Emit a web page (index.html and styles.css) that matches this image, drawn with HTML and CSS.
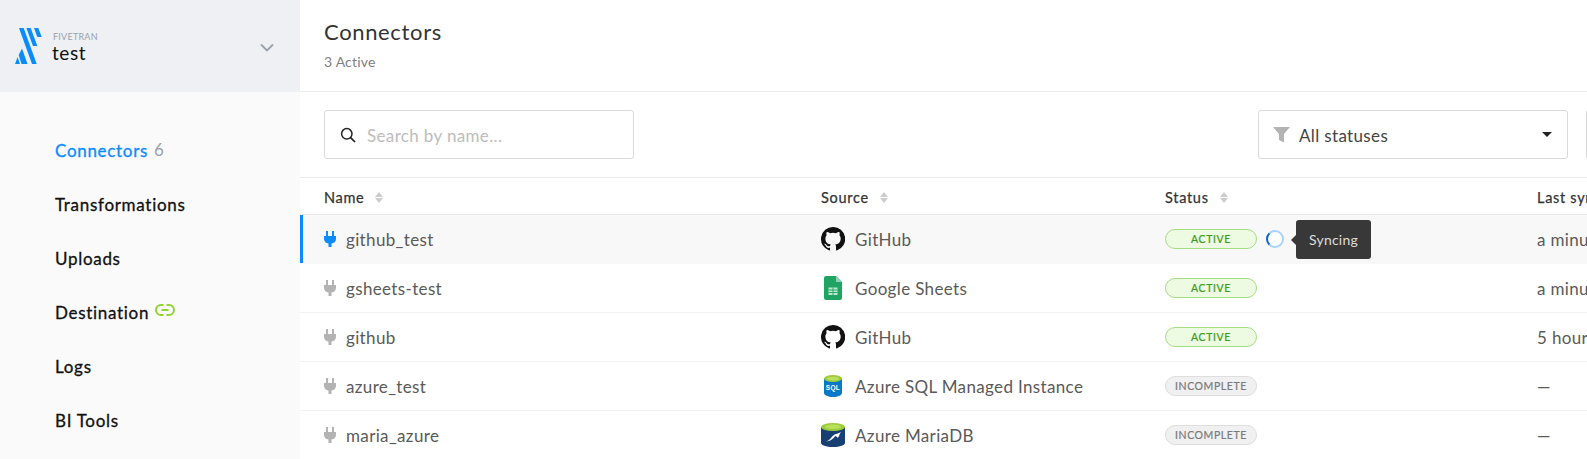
FILE: index.html
```html
<!DOCTYPE html>
<html lang="en">
<head>
<meta charset="utf-8">
<title>Connectors</title>
<link rel="stylesheet" href="styles.css">
</head>
<body>
<div class="app">
  <aside class="sidebar">
    <div class="brand">
      <svg class="logo" width="27" height="36" viewBox="0 0 27 36"><g fill="#0a8cff"><polygon points="4,0 8.700,0 21.700,36 17,36"/><polygon points="11.300,0 15.700,0 22.300,18 18,18"/><polygon points="19,0 23.300,0 26.700,9 22.300,9"/><polygon points="6.500,36 12.500,36 7,20.500 3.700,27"/><polygon points="0,36 5,36 2.600,29"/></g></svg>
      <div class="brand-text">
        <div class="brand-small">FIVETRAN</div>
        <div class="brand-name">test</div>
      </div>
      <svg class="chev" width="14" height="9" viewBox="0 0 14 9"><path d="M1 1.500l6 6 6-6" fill="none" stroke="#9aa1ab" stroke-width="1.800"/></svg>
    </div>
    <nav class="nav">
      <a class="nav-item is-current">Connectors <span class="nav-count">6</span></a>
      <a class="nav-item">Transformations</a>
      <a class="nav-item">Uploads</a>
      <a class="nav-item">Destination
        <svg class="link-icon" width="20" height="12" viewBox="0 0 20 12"><g fill="none" stroke="#8fd42f" stroke-width="2"><path d="M8.500 1H6a5 5 0 0 0 0 10h2.500"/><path d="M11.500 1H14a5 5 0 0 1 0 10h-2.500"/><path d="M6.500 6h7"/></g></svg>
      </a>
      <a class="nav-item">Logs</a>
      <a class="nav-item">BI Tools</a>
    </nav>
  </aside>
  <main class="main">
    <header class="head">
      <h1 class="title">Connectors</h1>
      <div class="sub">3 Active</div>
    </header>
    <div class="toolbar">
      <div class="search">
        <svg width="16" height="16" viewBox="0 0 16 16"><circle cx="6.800" cy="6.800" r="5.200" fill="none" stroke="#222" stroke-width="1.500"/><path d="M10.600 10.600L15 15" stroke="#222" stroke-width="1.700"/></svg>
        <span class="field-text">Search by name...</span>
      </div>
      <div class="select">
        <svg width="17" height="17" viewBox="0 0 17 17"><path d="M0 1h17l-6 7v8.500l-5-2.500V8z" fill="#b3b3b3"/></svg>
        <span class="select-text field-text">All statuses</span>
        <span class="caret"></span>
      </div>
      <div class="select-next"></div>
    </div>
    <div class="table">
      <div class="row row-head">
        <div class="c-name">Name<i class="sort"></i></div>
        <div class="c-src">Source<i class="sort"></i></div>
        <div class="c-status">Status<i class="sort"></i></div>
        <div class="c-last">Last sync</div>
      </div>
      <div class="row row-selected">
        <div class="c-name"><svg class="plug plug-on" viewBox="0 0 12 16"><path d="M2 0h2v5h4V0h2v5h2v3a5 5 0 0 1-4.500 4.500V16h-3v-3.500A5 5 0 0 1 0 8V5h2z"/></svg>github_test</div>
        <div class="c-src"><svg class="gh" viewBox="0 0 16 16"><path d="M8 0a8 8 0 0 0-2.530 15.590c.4.070.55-.170.550-.380v-1.340c-2.230.480-2.700-1.070-2.700-1.070-.360-.920-.890-1.170-.890-1.170-.730-.500.060-.490.060-.490.800.060 1.230.830 1.230.830.710 1.220 1.870.870 2.330.660.070-.520.280-.870.510-1.070-1.780-.200-3.640-.890-3.640-3.950 0-.870.310-1.590.820-2.150-.080-.200-.360-1.020.080-2.120 0 0 .670-.210 2.200.820a7.600 7.600 0 0 1 4 0c1.530-1.040 2.200-.820 2.200-.820.440 1.100.160 1.920.080 2.120.510.560.820 1.270.820 2.150 0 3.070-1.870 3.750-3.650 3.950.290.250.540.740.540 1.480v2.200c0 .210.150.460.550.380A8 8 0 0 0 8 0z"/></svg>GitHub</div>
        <div class="c-status"><span class="pill pill-ok">ACTIVE</span><span class="spinner"></span><span class="tip">Syncing</span></div>
        <div class="c-last">a minute ago</div>
      </div>
      <div class="row">
        <div class="c-name"><svg class="plug" viewBox="0 0 12 16"><path d="M2 0h2v5h4V0h2v5h2v3a5 5 0 0 1-4.500 4.500V16h-3v-3.500A5 5 0 0 1 0 8V5h2z"/></svg>gsheets-test</div>
        <div class="c-src"><svg class="sheet" viewBox="0 0 18 24"><path d="M2 0h10l6 6v16a2 2 0 0 1-2 2H2a2 2 0 0 1-2-2V2a2 2 0 0 1 2-2z" fill="#1fa463"/><path d="M12 0l6 6h-6z" fill="#8ed1b1"/><path d="M4.500 11.500h9v7.500h-9z" fill="#bfe6d0"/><path d="M4.500 14h9M4.500 16.500h9M9 11.500V19" stroke="#1fa463" stroke-width=".9"/></svg>Google Sheets</div>
        <div class="c-status"><span class="pill pill-ok">ACTIVE</span></div>
        <div class="c-last">a minute ago</div>
      </div>
      <div class="row">
        <div class="c-name"><svg class="plug" viewBox="0 0 12 16"><path d="M2 0h2v5h4V0h2v5h2v3a5 5 0 0 1-4.500 4.500V16h-3v-3.500A5 5 0 0 1 0 8V5h2z"/></svg>github</div>
        <div class="c-src"><svg class="gh" viewBox="0 0 16 16"><path d="M8 0a8 8 0 0 0-2.530 15.590c.4.070.55-.170.550-.380v-1.340c-2.230.480-2.700-1.070-2.700-1.070-.360-.920-.890-1.170-.890-1.170-.730-.500.060-.490.060-.490.800.060 1.230.830 1.230.830.710 1.220 1.870.870 2.330.660.070-.520.280-.870.510-1.070-1.780-.200-3.640-.890-3.640-3.950 0-.870.310-1.590.820-2.150-.080-.200-.360-1.020.080-2.120 0 0 .670-.210 2.200.820a7.600 7.600 0 0 1 4 0c1.530-1.040 2.200-.820 2.200-.820.440 1.100.160 1.920.080 2.120.510.560.820 1.270.820 2.150 0 3.070-1.870 3.750-3.650 3.950.290.250.540.740.540 1.480v2.200c0 .210.150.460.550.380A8 8 0 0 0 8 0z"/></svg>GitHub</div>
        <div class="c-status"><span class="pill pill-ok">ACTIVE</span></div>
        <div class="c-last">5 hours ago</div>
      </div>
      <div class="row">
        <div class="c-name"><svg class="plug" viewBox="0 0 12 16"><path d="M2 0h2v5h4V0h2v5h2v3a5 5 0 0 1-4.500 4.500V16h-3v-3.500A5 5 0 0 1 0 8V5h2z"/></svg>azure_test</div>
        <div class="c-src"><svg class="db" viewBox="0 0 18 22"><path d="M0 3.500V18c0 2 4 4 9 4s9-2 9-4V3.500z" fill="#0a78c8"/><ellipse cx="9" cy="3.500" rx="9" ry="3.500" fill="#9ccc3c"/><ellipse cx="9" cy="3.700" rx="6" ry="1.900" fill="#b9e05a"/><text x="9" y="15" class="db-text">SQL</text></svg>Azure SQL Managed Instance</div>
        <div class="c-status"><span class="pill pill-off">INCOMPLETE</span></div>
        <div class="c-last">—</div>
      </div>
      <div class="row">
        <div class="c-name"><svg class="plug" viewBox="0 0 12 16"><path d="M2 0h2v5h4V0h2v5h2v3a5 5 0 0 1-4.500 4.500V16h-3v-3.500A5 5 0 0 1 0 8V5h2z"/></svg>maria_azure</div>
        <div class="c-src"><svg class="db db-wide" viewBox="0 0 24 24"><path d="M0 4v16c0 2 5 4 12 4s12-2 12-4V4z" fill="#183f73"/><ellipse cx="12" cy="4" rx="12" ry="4" fill="#9ccc3c"/><ellipse cx="12" cy="3.800" rx="8" ry="2.200" fill="#b9e05a"/><path d="M3 19c3-.5 5-1.500 7-4 1.500-2 3-3.500 5-4 1.500-.3 3-1 5-2-1 1.500-1.500 2.500-2 4-.4 1-1 1.800-1.500 1.700l-.8-.9-1.500-.8c-2 2.500-4 5.200-11.200 6z" fill="#fff"/></svg>Azure MariaDB</div>
        <div class="c-status"><span class="pill pill-off">INCOMPLETE</span></div>
        <div class="c-last">—</div>
      </div>
    </div>
  </main>
</div>
</body>
</html>
```
FILE: styles.css
```css
* { box-sizing: border-box; }
html, body { margin: 0; height: 100%; overflow: hidden; }
body { font-family: "Lato", "Liberation Sans", sans-serif; color: #333; background: #fff; }
.app { display: flex; height: 459px; width: 1587px; overflow: hidden; }

.sidebar { width: 300px; flex: none; background: #fafafa; }
.brand { height: 92px; background: #eef0f3; display: flex; align-items: center; padding: 0 26px 0 15px; }
.logo { flex: none; margin-right: 10px; }
.brand-text { flex: 1; margin-top: 2px; }
.brand-small { font-size: 9px; line-height: 10px; color: #9aa1ab; letter-spacing: .25px; margin-left: 1px; }
.brand-name { font-size: 19px; line-height: 21px; color: #111; letter-spacing: .6px; }
.chev { flex: none; margin-top: 3px; }
.nav { display: flex; flex-direction: column; padding: 31px 0 0 55px; }
.nav-item { height: 54px; display: flex; align-items: center; gap: 6px; font-size: 17px; font-weight: 400; color: #111; letter-spacing: .7px; -webkit-text-stroke: .3px currentColor; }
.nav-item.is-current { color: #0a8cff; }
.nav-count { color: #9aa1ab; -webkit-text-stroke: 0; margin-top: -1px; }
.link-icon { margin: -4px 0 0 0; }

.main { flex: 1; min-width: 0; overflow: hidden; }
.head { height: 92px; padding: 17px 24px 0; border-bottom: 1px solid #eaeaea; }
.title { margin: 0; font-size: 22px; line-height: 30px; font-weight: 400; color: #333; letter-spacing: .65px; }
.sub { margin-top: 6px; font-size: 14px; line-height: 18px; color: #808080; letter-spacing: .2px; }

.toolbar { height: 86px; padding: 18px 0 0 24px; display: flex; border-bottom: 1px solid #eaeaea; }
.search { width: 310px; height: 49px; flex: none; border: 1px solid #d9d9d9; border-radius: 3px; display: flex; align-items: center; gap: 11px; padding: 0 15px; font-size: 17px; color: #bdbdbd; letter-spacing: .35px; }
.field-text { padding-top: 1px; }
.select { width: 310px; height: 49px; flex: none; margin-left: 624px; border: 1px solid #d9d9d9; border-radius: 3px; display: flex; align-items: center; padding: 0 15px 0 14px; font-size: 17px; color: #444; letter-spacing: .35px; }
.select-text { flex: 1; margin-left: 9px; }
.caret { width: 0; height: 0; border: 5px solid transparent; border-top: 5px solid #222; border-bottom: 0; }
.select-next { width: 10px; height: 49px; flex: none; margin-left: 18px; border: 1px solid #d9d9d9; border-right: 0; border-radius: 3px 0 0 3px; }

.row { display: grid; grid-template-columns: 497px 344px 372px 1fr; height: 49px; align-items: center; padding-left: 24px; border-bottom: 1px solid #f2f2f2; font-size: 17px; color: #5a5a5a; letter-spacing: .35px; white-space: nowrap; }
.row > div { display: flex; align-items: center; min-width: 0; }
.row-head { height: 37px; padding-top: 2px; font-size: 14.500px; color: #333; border-bottom-color: #e8e8e8; letter-spacing: .7px; -webkit-text-stroke: .25px currentColor; }
.row-selected { background: #f8f8f8; border-bottom-color: #f8f8f8; box-shadow: inset 3px 0 0 #0a8cff; }
.c-last { overflow: hidden; }

.sort { display: inline-block; width: 8px; height: 11px; margin-left: 11px; position: relative; }
.sort::before, .sort::after { content: ""; position: absolute; left: 0; border: 4px solid transparent; }
.sort::before { top: 0; border-bottom: 5px solid #ccc; border-top: 0; }
.sort::after { bottom: 0; border-top: 5px solid #ccc; border-bottom: 0; }

.plug { width: 12px; height: 16px; fill: #b3b3b3; flex: none; margin-right: 10px; }
.plug-on { fill: #0a8cff; }
.gh { width: 24px; height: 24px; fill: #111; flex: none; margin-right: 10px; }
.sheet { width: 18px; height: 24px; flex: none; margin: 0 13px 0 3px; }
.db { width: 18px; height: 22px; flex: none; margin: 0 13px 0 3px; }
.db-wide { width: 24px; height: 24px; margin: 0 10px 0 0; }
.db-text { font: 700 6.500px "Liberation Sans", sans-serif; fill: #fff; text-anchor: middle; }

.pill { display: inline-block; width: 92px; height: 20px; border-radius: 10px; text-align: center; font-size: 10.500px; line-height: 18px; letter-spacing: .6px; border: 1px solid; -webkit-text-stroke: .2px currentColor; }
.pill-ok { background: #ecfbe2; border-color: #a5dd85; color: #3c9a1e; }
.pill-off { background: #f0f0f0; border-color: #dedede; color: #7a7a7a; }
.spinner { width: 18px; height: 18px; margin-left: 9px; border-radius: 50%; border: 2px solid #a6d4ff; border-left-color: #0a63c8; background: #fff; flex: none; }
.tip { position: relative; margin-left: 12px; width: 75px; height: 39px; flex: none; background: #383838; color: #ddd; border-radius: 3px; font-size: 14px; letter-spacing: .2px; display: flex; align-items: center; justify-content: center; }
.tip::before { content: ""; position: absolute; left: -5px; top: 15px; border: 5px solid transparent; border-right-color: #383838; border-left: 0; }
```
